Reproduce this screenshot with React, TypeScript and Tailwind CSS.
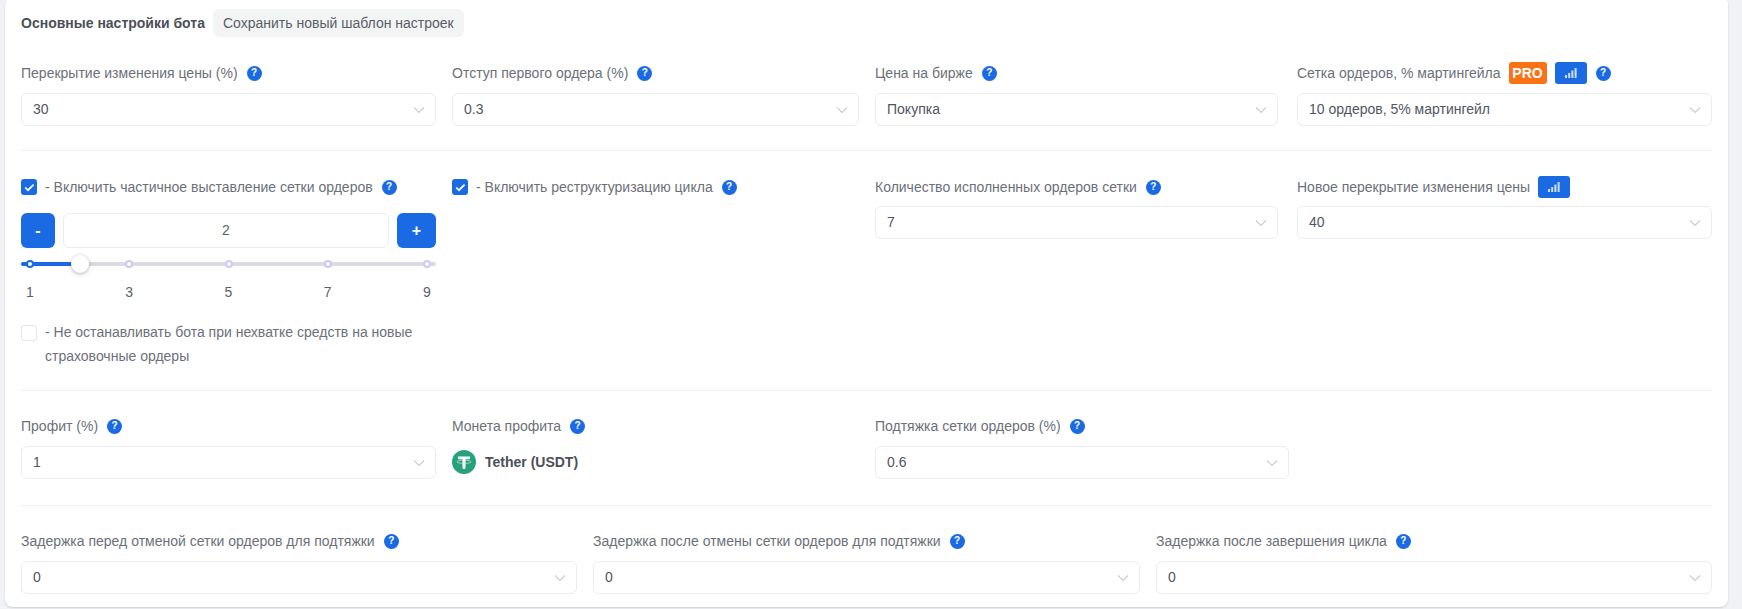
import React from "react";

function Help() {
  return (
    <span className="ml-[9px] inline-flex h-[15px] w-[15px] shrink-0 items-center justify-center rounded-full bg-[#1a6ae3] text-[10px] font-bold leading-none text-white">
      ?
    </span>
  );
}

function Chevron() {
  return (
    <svg width="12" height="8" viewBox="0 0 12 8" fill="none" className="shrink-0">
      <path d="M1 1.5 L6 6.5 L11 1.5" stroke="#c9ccd1" strokeWidth="1.1" />
    </svg>
  );
}

function Select({ value }: { value: string }) {
  return (
    <div className="flex h-[33px] items-center justify-between rounded-md border border-[#ebedf0] bg-white pl-[11px] pr-[10px] text-[14px] text-[#4f5661]">
      <span>{value}</span>
      <Chevron />
    </div>
  );
}

function Bars() {
  return (
    <span className="inline-flex h-[22px] w-[32px] shrink-0 items-center justify-center rounded-[3px] bg-[#1a6ae3]">
      <svg width="12" height="10" viewBox="0 0 12 10" fill="#cfe0fb">
        <rect x="0" y="7" width="2" height="3" />
        <rect x="3.2" y="5" width="2" height="5" />
        <rect x="6.4" y="2.5" width="2" height="7.5" />
        <rect x="9.6" y="0" width="2" height="10" />
      </svg>
    </span>
  );
}

function Label({ children }: { children: React.ReactNode }) {
  return <div className="flex h-[22px] items-center text-[14px] text-[#6b7079]">{children}</div>;
}

function Field({ label, value, tight = false }: { label: string; value: string; tight?: boolean }) {
  return (
    <div>
      <Label>
        {label}
        <Help />
      </Label>
      <div className={tight ? "mt-[8px]" : "mt-[9px]"}>
        <Select value={value} />
      </div>
    </div>
  );
}

function Check({ on }: { on?: boolean }) {
  return on ? (
    <span className="flex h-[16px] w-[16px] shrink-0 items-center justify-center rounded-[3px] bg-[#1a6ae3]">
      <svg width="11" height="9" viewBox="0 0 11 9" fill="none">
        <path d="M1.2 4.5 L4 7.2 L9.6 1.6" stroke="white" strokeWidth="1.7" />
      </svg>
    </span>
  ) : (
    <span className="block h-[16px] w-[16px] shrink-0 rounded-[3px] border border-[#e4e6ea] bg-white" />
  );
}

function Divider() {
  return <div className="h-[1px] bg-[#eff0f2]" />;
}

function Tether() {
  return (
    <svg width="24" height="24" viewBox="0 0 24 24" className="shrink-0">
      <circle cx="12" cy="12" r="12" fill="#26a17b" />
      <path d="M6 6.5 H18 V9.3 H13.5 V18.8 H10.5 V9.3 H6 Z" fill="white" />
      <ellipse cx="12" cy="11.8" rx="7" ry="1.6" fill="none" stroke="white" strokeOpacity="0.65" strokeWidth="0.8" />
    </svg>
  );
}

const marks = ["1", "3", "5", "7", "9"];

function Slider() {
  return (
    <div className="relative mt-[14px] h-[4px] rounded-full bg-[#dadbe0]">
      <div className="absolute left-0 top-0 h-[4px] w-[59px] rounded-full bg-[#1a6ae3]" />
      <div className="absolute inset-x-[9px] top-[-2px] flex justify-between">
        {marks.map((m, i) => (
          <span key={m} className="relative h-[8px] w-0">
            <span
              className={
                "absolute left-[-4px] top-0 h-[8px] w-[8px] rounded-full border-2 bg-white " +
                (i === 0 ? "border-[#1a6ae3]" : "border-[#cfc8f3]")
              }
            />
          </span>
        ))}
      </div>
      <div className="absolute left-[50px] top-[-7px] h-[18px] w-[18px] rounded-full bg-white shadow-[0_1px_4px_rgba(0,0,0,0.3)]" />
    </div>
  );
}

export default function App() {
  return (
    <div
      className="min-h-[609px] bg-[#f0f2f5] pl-[5px] pr-[14px] text-[14px]"
      style={{ fontFamily: "'Liberation Sans', Arial, sans-serif" }}
    >
      <div className="h-[607px] rounded-b-lg rounded-t-sm bg-white px-4 pt-[9px] shadow-[0_1px_2px_rgba(0,0,0,0.15)]">
        <div className="flex h-[28px] items-center">
          <span className="font-bold text-[#4b5058]">Основные настройки бота</span>
          <span className="ml-2 flex h-[28px] items-center rounded-md bg-[#f3f5f5] px-[10px] text-[#585e67]">
            Сохранить новый шаблон настроек
          </span>
        </div>

        <div className="mt-[25px] grid grid-cols-[415px_407px_403px_415px] gap-x-[16px]">
          <Field label="Перекрытие изменения цены (%)" value="30" />
          <Field label="Отступ первого ордера (%)" value="0.3" />
          <Field label="Цена на бирже" value="Покупка" />
          <div className="ml-[3px] w-[415px]">
            <Label>
              Сетка ордеров, % мартингейла
              <span className="ml-2 flex h-[22px] w-[38px] items-center justify-center rounded-[3px] bg-[#f97316] text-[14px] font-bold text-white">
                PRO
              </span>
              <span className="ml-2 flex">
                <Bars />
              </span>
              <Help />
            </Label>
            <div className="mt-[9px]">
              <Select value="10 ордеров, 5% мартингейл" />
            </div>
          </div>
        </div>

        <div className="mt-[24px]">
          <Divider />
        </div>

        <div className="mt-[25px] grid grid-cols-[415px_407px_403px_415px] gap-x-[16px]">
          <div>
            <div className="flex h-[22px] items-center text-[#6b7079]">
              <Check on />
              <span className="ml-2">- Включить частичное выставление сетки ордеров</span>
              <Help />
            </div>
            <div className="mt-[15px] flex h-[35px] gap-2">
              <div className="flex w-[34px] items-center justify-center rounded-md bg-[#1a6ae3] text-[16px] font-bold text-white">-</div>
              <div className="flex flex-1 items-center justify-center rounded-md border border-[#ebedf0] text-[#5a5f68]">2</div>
              <div className="flex w-[39px] items-center justify-center rounded-md bg-[#1a6ae3] text-[16px] font-bold text-white">+</div>
            </div>
            <Slider />
            <div className="mt-[16px] flex h-[20px] justify-between px-[9px] text-[#5a5f68]">
              {marks.map((m) => (
                <span key={m} className="flex w-0 justify-center">
                  {m}
                </span>
              ))}
            </div>
            <div className="mt-[18px] flex text-[#6b7079]">
              <span className="mt-[5px]">
                <Check />
              </span>
              <span className="ml-2 leading-[24px]">
                - Не останавливать бота при нехватке средств на новые страховочные ордеры
              </span>
            </div>
          </div>
          <div className="flex h-[22px] items-center text-[#6b7079]">
            <Check on />
            <span className="ml-2">- Включить реструктуризацию цикла</span>
            <Help />
          </div>
          <Field label="Количество исполненных ордеров сетки" value="7" tight />
          <div className="ml-[3px] w-[415px]">
            <Label>
              Новое перекрытие изменения цены
              <span className="ml-2 flex">
                <Bars />
              </span>
            </Label>
            <div className="mt-[8px]">
              <Select value="40" />
            </div>
          </div>
        </div>

        <div className="mt-[22px]">
          <Divider />
        </div>

        <div className="mt-[24px] grid grid-cols-[415px_407px_414px] gap-x-[16px]">
          <Field label="Профит (%)" value="1" />
          <div>
            <Label>
              Монета профита
              <Help />
            </Label>
            <div className="mt-[13px] flex items-center">
              <Tether />
              <span className="ml-[9px] font-bold text-[#4b5058]">Tether (USDT)</span>
            </div>
          </div>
          <Field label="Подтяжка сетки ордеров (%)" value="0.6" />
        </div>

        <div className="mt-[26px]">
          <Divider />
        </div>

        <div className="mt-[24px] grid grid-cols-[556px_547px_556px] gap-x-[16px]">
          <Field label="Задержка перед отменой сетки ордеров для подтяжки" value="0" />
          <Field label="Задержка после отмены сетки ордеров для подтяжки" value="0" />
          <Field label="Задержка после завершения цикла" value="0" />
        </div>
      </div>
    </div>
  );
}
